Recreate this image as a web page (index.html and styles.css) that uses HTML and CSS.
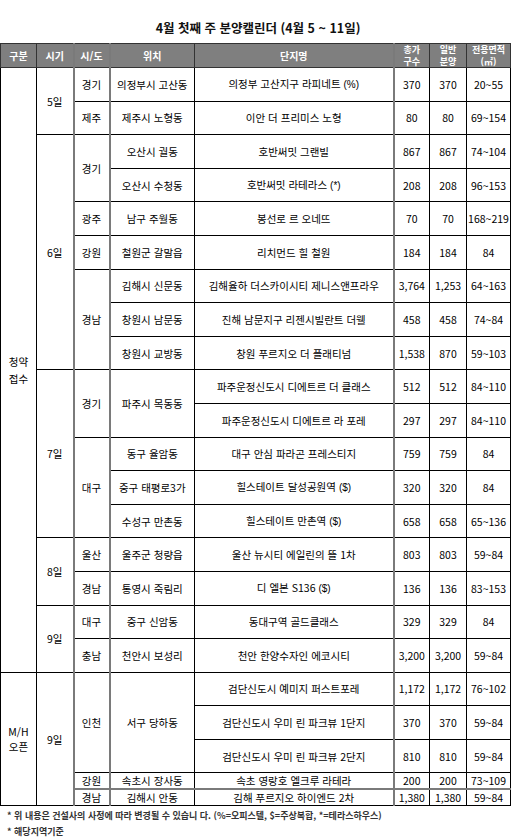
FILE: index.html
```html
<!DOCTYPE html>
<html lang="ko">
<head>
<meta charset="utf-8">
<link rel="stylesheet" href="styles.css">
</head>
<body>
<div class="title">4월 첫째 주 분양캘린더 (4월 5 ~ 11일)</div>
<table class="cal">
<colgroup>
<col class="c1"><col class="c2"><col class="c3"><col class="c4"><col class="c5"><col class="c6"><col class="c7"><col class="c8">
</colgroup>
<thead>
<tr>
<th>구분</th><th>시기</th><th class="g">시/도</th><th class="g">위치</th><th>단지명</th><th class="g two">총가<br>구수</th><th class="two">일반<br>분양</th><th class="two">전용면적<br>(㎡)</th>
</tr>
</thead>
<tbody>
<tr><td class="cat1" rowspan="18">청약<br>접수</td><td rowspan="2">5일</td><td class="g">경기</td><td class="g">의정부시 고산동</td><td>의정부 고산지구 라피네트 <span class="s">(%)</span></td><td class="g">370</td><td>370</td><td>20~55</td></tr>
<tr><td class="g">제주</td><td class="g">제주시 노형동</td><td>이안 더 프리미스 노형</td><td class="g">80</td><td>80</td><td>69~154</td></tr>
<tr><td rowspan="7">6일</td><td class="g" rowspan="2">경기</td><td class="g">오산시 궐동</td><td>호반써밋 그랜빌</td><td class="g">867</td><td>867</td><td>74~104</td></tr>
<tr><td class="g">오산시 수청동</td><td>호반써밋 라테라스 <span class="s">(*)</span></td><td class="g">208</td><td>208</td><td>96~153</td></tr>
<tr><td class="g">광주</td><td class="g">남구 주월동</td><td>봉선로 르 오네뜨</td><td class="g">70</td><td>70</td><td>168~219</td></tr>
<tr><td class="g">강원</td><td class="g">철원군 갈말읍</td><td>리치먼드 힐 철원</td><td class="g">184</td><td>184</td><td>84</td></tr>
<tr><td class="g" rowspan="3">경남</td><td class="g">김해시 신문동</td><td>김해율하 더스카이시티 제니스앤프라우</td><td class="g">3,764</td><td>1,253</td><td>64~163</td></tr>
<tr><td class="g">창원시 남문동</td><td>진해 남문지구 리젠시빌란트 더웰</td><td class="g">458</td><td>458</td><td>74~84</td></tr>
<tr><td class="g">창원시 교방동</td><td>창원 푸르지오 더 플래티넘</td><td class="g">1,538</td><td>870</td><td>59~103</td></tr>
<tr><td rowspan="5">7일</td><td class="g" rowspan="2">경기</td><td class="g" rowspan="2">파주시 목동동</td><td>파주운정신도시 디에트르 더 클래스</td><td class="g">512</td><td>512</td><td>84~110</td></tr>
<tr><td>파주운정신도시 디에트르 라 포레</td><td class="g">297</td><td>297</td><td>84~110</td></tr>
<tr><td class="g" rowspan="3">대구</td><td class="g">동구 율암동</td><td>대구 안심 파라곤 프레스티지</td><td class="g">759</td><td>759</td><td>84</td></tr>
<tr><td class="g">중구 태평로3가</td><td>힐스테이트 달성공원역 <span class="s">($)</span></td><td class="g">320</td><td>320</td><td>84</td></tr>
<tr><td class="g">수성구 만촌동</td><td>힐스테이트 만촌역 <span class="s">($)</span></td><td class="g">658</td><td>658</td><td>65~136</td></tr>
<tr><td rowspan="2">8일</td><td class="g">울산</td><td class="g">울주군 청량읍</td><td>울산 뉴시티 에일린의 뜰 1차</td><td class="g">803</td><td>803</td><td>59~84</td></tr>
<tr><td class="g">경남</td><td class="g">통영시 죽림리</td><td>디 엘본 S136 <span class="s">($)</span></td><td class="g">136</td><td>136</td><td>83~153</td></tr>
<tr><td rowspan="2">9일</td><td class="g">대구</td><td class="g">중구 신암동</td><td>동대구역 골드클래스</td><td class="g">329</td><td>329</td><td>84</td></tr>
<tr><td class="g">충남</td><td class="g">천안시 보성리</td><td>천안 한양수자인 에코시티</td><td class="g">3,200</td><td>3,200</td><td>59~84</td></tr>
<tr><td class="cat2" rowspan="5">M/H<br>오픈</td><td rowspan="5">9일</td><td class="g" rowspan="3">인천</td><td class="g" rowspan="3">서구 당하동</td><td>검단신도시 예미지 퍼스트포레</td><td class="g">1,172</td><td>1,172</td><td>76~102</td></tr>
<tr><td>검단신도시 우미 린 파크뷰 1단지</td><td class="g">370</td><td>370</td><td>59~84</td></tr>
<tr><td>검단신도시 우미 린 파크뷰 2단지</td><td class="g">810</td><td>810</td><td>59~84</td></tr>
<tr class="short"><td class="g">강원</td><td class="g">속초시 장사동</td><td>속초 영랑호 엘크루 라테라</td><td class="g">200</td><td>200</td><td>73~109</td></tr>
<tr class="short last"><td class="g">경남</td><td class="g">김해시 안동</td><td>김해 푸르지오 하이엔드 2차</td><td class="g">1,380</td><td>1,380</td><td>59~84</td></tr>
</tbody>
</table>
<div class="notes">
<p>* 위 내용은 건설사의 사정에 따라 변경될 수 있습니 다. (%=오피스텔, $=주상복합, *=테라스하우스)</p>
<p>* 해당지역기준</p>
</div>
</body>
</html>
```

FILE: styles.css
```css
html, body {
  margin: 0;
  padding: 0;
  background: #fff;
}
body {
  font-family: "Noto Sans CJK KR", "Noto Sans", sans-serif;
  color: #000;
  width: 512px;
}
.title {
  height: 43px;
  box-sizing: border-box;
  padding-top: 20px;
  line-height: 16px;
  font-size: 12.5px;
  font-weight: bold;
  text-align: center;
  color: #111;
  padding-left: 4px;
}
.cal {
  border-collapse: collapse;
  table-layout: fixed;
  width: 511px;
  font-size: 10.5px;
}
.c1 { width: 36px; }
.c2 { width: 37px; }
.c3 { width: 36px; }
.c4 { width: 85px; }
.c5 { width: 199px; }
.c6 { width: 36px; }
.c7 { width: 37px; }
.c8 { width: 44px; }
.cal th {
  background: #7f7f7f;
  color: #fff;
  font-weight: bold;
  font-size: 10px;
  line-height: 12px;
  height: 23px;
  padding: 0;
  border: 1px solid #333;
  text-align: center;
  vertical-align: middle;
  white-space: nowrap;
}
.cal th.two {
  font-size: 9px;
  line-height: 11.5px;
}
.cal td {
  border: 1px solid #000;
  padding: 0;
  text-align: center;
  vertical-align: middle;
  line-height: 13px;
  white-space: nowrap;
}
.cal td.cat1 {
  line-height: 17px;
}
.cal td.cat2 {
  line-height: 15px;
}
.cal tbody tr {
  height: 33.6px;
}
.cal tbody tr.short {
  height: 16.5px;
}
.cal tbody tr.short td {
  line-height: 12px;
}
.cal .g {
  border-left: 2px solid #7a7a7a;
}
.cal tr.last td {
  border-top: 2px solid #7a7a7a;
}
.s {
  font-family: "Liberation Sans", Arial, sans-serif;
  font-size: 10px;
}
.notes {
  padding: 2px 0 0 7px;
  font-size: 9px;
  font-weight: bold;
  color: #333;
}
.notes p {
  margin: 0;
  line-height: 16px;
}
```
